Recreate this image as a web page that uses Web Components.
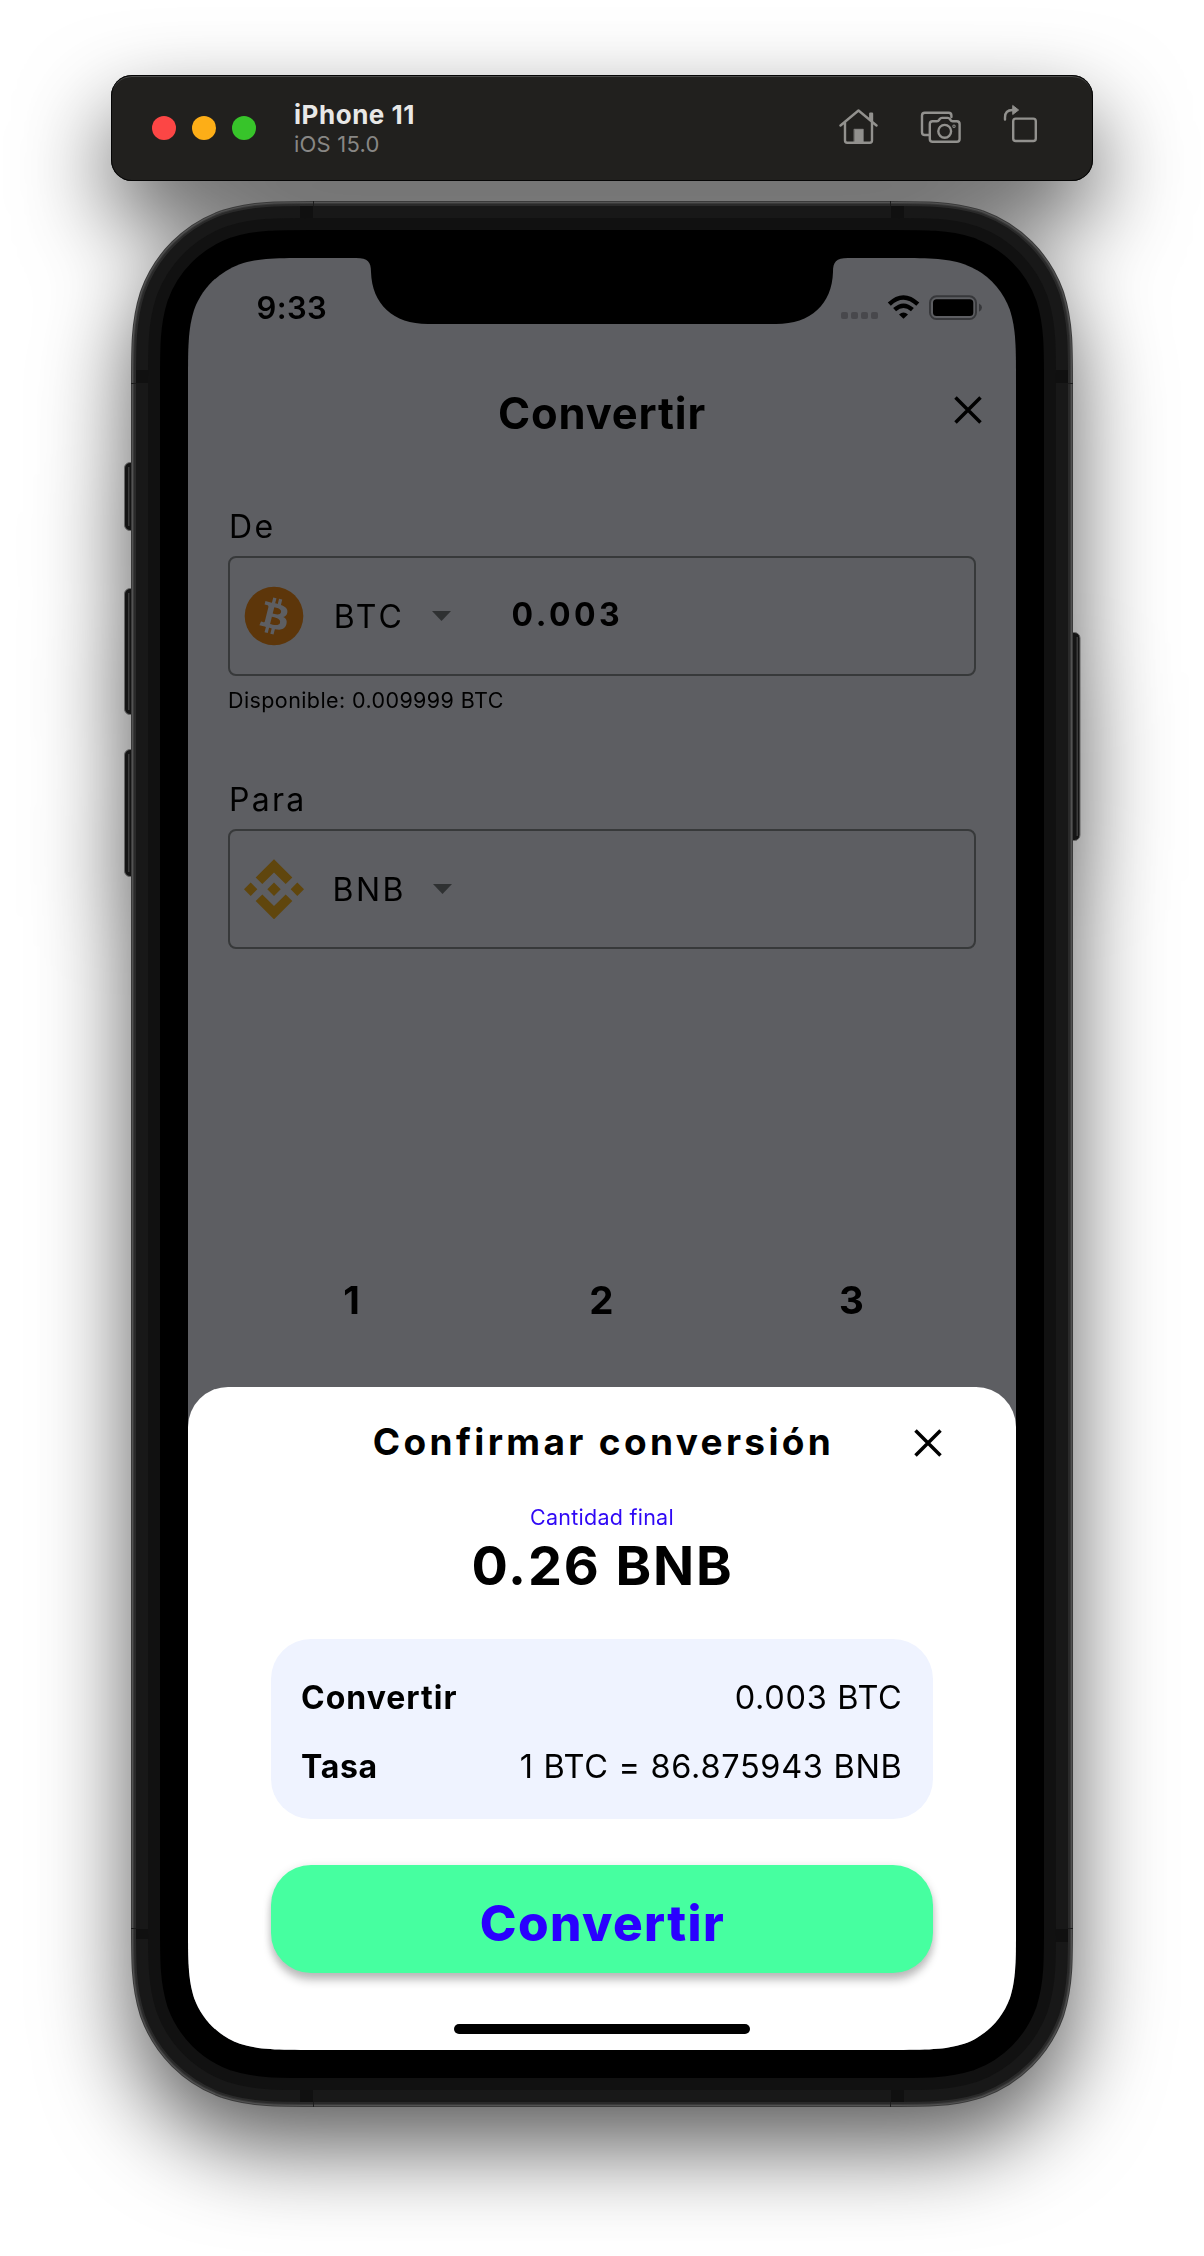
<!DOCTYPE html>
<html lang="es">
<head>
<meta charset="utf-8">
<title>Convertir</title>
<style>
html,body{margin:0;background:#fff}
body{width:1204px;height:2256px;overflow:hidden;font-family:Inter,"Liberation Sans",sans-serif;color:#000}
</style>
</head>
<body>
<simulator-stage>
  <simulator-bar name="iPhone 11" os="iOS 15.0"></simulator-bar>
  <phone-frame>
    <status-bar time="9:33"></status-bar>
    <screen-header>Convertir</screen-header>
    <coin-field label="De" coin="BTC" amount="0.003" note="Disponible: 0.009999 BTC"></coin-field>
    <coin-field class="to" label="Para" coin="BNB"></coin-field>
    <key-row keys="1 2 3"></key-row>
    <confirm-sheet slot="sheet">
      <sheet-row label="Convertir">0.003 BTC</sheet-row>
      <sheet-row label="Tasa" style="--ls:.7px">1 BTC = 86.875943 BNB</sheet-row>
    </confirm-sheet>
  </phone-frame>
</simulator-stage>
<script>
const define = (name, render) => customElements.define(name, class extends HTMLElement {
  connectedCallback() {
    if (this.shadowRoot) return;
    const attr = (key) => this.getAttribute(key) || '';
    this.attachShadow({ mode: 'open' }).innerHTML = '<style>*{box-sizing:border-box}svg{display:block}</style>' + render(attr);
  }
});

// Continuous-corner outline of the display, 828 x 1792
const corner = (() => {
  const r = 82, w = 828, h = 1792;
  const k = [1.528665, 1.08849, .86841, .63149, .37282, .16906, .07491].map(v => +(v * r).toFixed(2));
  const [a, b, c, d, e, f, g] = k;
  return `M${a} 0H${w-a}C${w-b} 0 ${w-c} 0 ${w-d} ${g}C${w-e} ${f} ${w-f} ${e} ${w-g} ${d}C${w} ${c} ${w} ${b} ${w} ${a}` +
    `V${h-a}C${w} ${h-b} ${w} ${h-c} ${w-g} ${h-d}C${w-f} ${h-e} ${w-e} ${h-f} ${w-d} ${h-g}C${w-c} ${h} ${w-b} ${h} ${w-a} ${h}` +
    `H${a}C${b} ${h} ${c} ${h} ${d} ${h-g}C${e} ${h-f} ${f} ${h-e} ${g} ${h-d}C0 ${h-c} 0 ${h-b} 0 ${h-a}` +
    `V${a}C0 ${b} 0 ${c} ${g} ${d}C${f} ${e} ${e} ${f} ${d} ${g}C${c} 0 ${b} 0 ${a} 0Z`;
})();

define('simulator-stage', () => `
<style>:host{display:flex;flex-direction:column;align-items:center;gap:20px;padding-top:75px;height:2181px;filter:drop-shadow(0 40px 45px rgba(0,0,0,.64))}</style>
<slot></slot>`);

define('simulator-bar', (a) => `
<style>
:host{display:flex;align-items:center;width:982px;height:106px;flex:none;box-sizing:border-box;padding:0 55px 0 41px;border-radius:21px;background:#21201e;
 box-shadow:inset 0 0 0 1px #050505,inset 0 2px 0 0 #4b4b4a}
.lights{display:flex;gap:16px}
.lights i{width:24px;height:24px;border-radius:50%}
.names{margin-left:38px;flex:1;display:flex;flex-direction:column}
b{font:700 26px/31px Inter,sans-serif;letter-spacing:.53px;color:#e8e8e7}
span{font:400 22px/28px Inter,sans-serif;letter-spacing:.22px;color:#888785}
.tools{display:flex;gap:41.5px}
.tools svg{fill:none;stroke:#92918e;stroke-width:2.4;stroke-linejoin:round;stroke-linecap:round}
</style>
<div class="lights"><i style="background:#fc4645"></i><i style="background:#fdae17"></i><i style="background:#37c42a"></i></div>
<div class="names"><b>${a('name')}</b><span>${a('os')}</span></div>
<div class="tools">
<svg width="40" height="50" viewBox="838 103 40 50"><path d="M840.5 125.5L858.5 110.5L876.5 125.5M845 122.5V140.6Q845 142.8 847.2 142.8H869.8Q872 142.8 872 140.6V113.6H870.3V119.5"/><path d="M854.3 129.2h9v13.6h-9z" fill="#92918e" stroke-width=".6"/></svg>
<svg width="42" height="50" viewBox="920 103 42 50"><path d="M929 135H924.8Q922 135 922 132.2V115.6Q922 112.8 924.8 112.8H948.6Q951.4 112.8 951.4 115.6V117"/><path d="M932.6 121.2H937Q938.4 121.2 939.2 119.8L939.7 119Q940.5 117.9 942 117.9H947.6Q949.1 117.9 949.9 119L950.4 119.8Q951.2 121.2 952.6 121.2H956.8Q959.6 121.2 959.6 124V138.9Q959.6 141.7 956.8 141.7H932.6Q929.8 141.7 929.8 138.9V124Q929.8 121.2 932.6 121.2Z"/><circle cx="944.7" cy="131.3" r="6.4"/><circle cx="954" cy="126.3" r=".5"/></svg>
<svg width="35" height="50" viewBox="1003 103 35 50"><rect x="1013.2" y="118.6" width="22.6" height="22.4" rx="2.6"/><path d="M1005 119.6V117.5Q1005 110 1012.5 110"/><path d="M1013 105.7L1018.6 110L1013 114.3Z" fill="#92918e" stroke-width="1"/></svg>
</div>`);

define('phone-frame', () => {
  const rings = [[57,'#3a3a3a'],[56,'#525252'],[55,'#3a3a3a'],[54,'#2a2a2a'],[52,'#181818'],[40,'#111'],[28,'#000']];
  const button = (x, y, h, hx) => `<rect x="${x+.5}" y="${y+.5}" width="14" height="${h-1}" rx="5.5" fill="#141414" stroke="#666"/><rect x="${hx}" y="${y+5}" width="1.5" height="${h-10}" fill="#3b3b3b"/>`;
  return `
<style>
:host{display:block;position:relative;width:942px;height:1906px;flex:none;box-sizing:border-box;padding:57px}
.shell{position:absolute;inset:0;overflow:visible}
.screen{position:relative;display:flex;flex-direction:column;width:828px;height:1792px;background:#5d5e62;clip-path:path('${corner}');overflow:hidden}
.notch{position:absolute;left:0;top:0}
::slotted(.to){margin-top:66px}
.sheet{position:absolute;left:0;right:0;bottom:0}
</style>
<svg class="shell" width="942" height="1906">
${button(-7,261,69,-3)}${button(-7,387,127,-3)}${button(-7,548,128,-3)}${button(934.5,431,209,945.5)}
<g transform="translate(57 57)" fill="none">${rings.map(([w,c]) => `<path d="${corner}" stroke="${c}" stroke-width="${w*2}"/>`).join('')}</g>
<path fill="#101010" d="M169 5h13v12h-13zM760 5h13v12h-13zM169 1889h13v12h-13zM760 1889h13v12h-13zM5 169h12v13H5zM925 169h12v13h-12zM5 1728h12v10H5zM925 1728h12v13h-12z"/>
<path fill="#1c1c1c" d="M182 0h1v5h-1zM759 0h1v5h-1zM182 1901h1v5h-1zM759 1901h1v5h-1zM0 182h5v1H0zM937 182h5v1h-5zM0 1727h5v1H0zM937 1727h5v1h-5z"/>
</svg>
<div class="screen"><slot></slot>
<svg class="notch" width="828" height="70"><path d="M168 0C180 0 183 4 183 14C184 46 205 66 240 66H588C623 66 644 46 645 14C645 4 648 0 660 0Z"/></svg>
<div class="sheet"><slot name="sheet"></slot></div></div>`;
});

define('status-bar', (a) => `
<style>:host{display:flex;justify-content:space-between;height:125px;flex:none;box-sizing:border-box;padding:32px 33px 0 68.5px}
span{font:600 31px/36px Inter,sans-serif;letter-spacing:.35px}svg{margin-top:4px}</style>
<span>${a('time')}</span>
<svg width="142" height="26" viewBox="841 294 142 26">
<g fill="#48484c"><rect x="841" y="312" width="7" height="7" rx="2"/><rect x="851" y="312" width="7" height="7" rx="2"/><rect x="861" y="312" width="7" height="7" rx="2"/><rect x="871" y="312" width="7" height="7" rx="2"/></g>
<g fill="none" stroke="#000"><path d="M889.3 304.2Q903.4 290.8 917.8 304.2" stroke-width="4.4"/><path d="M894.6 309.7Q903.5 301.6 912.4 309.7" stroke-width="4.3"/></g>
<path d="M899 314.4Q903.5 310.6 908 314.4L903.5 318.8Z"/>
<rect x="930" y="296.3" width="46" height="22.7" rx="6.5" fill="none" stroke="#37383b" stroke-width="2"/>
<rect x="933" y="299.2" width="40.3" height="16.8" rx="3.5"/>
<path d="M979 303.5Q982 305 982 307.6Q982 310.2 979 311.7Z" fill="#37383b"/></svg>`);

const cross = '<svg width="28" height="28" viewBox="0 0 28 28"><path d="M1.5 1.5L26.5 26.5M26.5 1.5L1.5 26.5" stroke="#000" stroke-width="3.5"/></svg>';

define('screen-header', () => `
<style>:host{display:grid;grid-template-columns:1fr auto 1fr;align-items:center;height:60px;flex:none;margin-bottom:64px;padding:0 34px}
h1{grid-column:2;margin:0;font:700 43.5px/60px Inter,sans-serif;letter-spacing:.85px}
svg{justify-self:end;margin-bottom:6px}</style><h1><slot></slot></h1>${cross}`);

const coins = {
  BTC: { ls: 2.9, shift: -.3, art: '<circle cx="30" cy="30" r="29.3" fill="#5d360a"/><path transform="translate(.2 .2) scale(1.8625)" fill="#5d5e62" d="M23.189 14.02c.314-2.096-1.283-3.223-3.465-3.975l.708-2.84-1.728-.43-.69 2.765c-.454-.114-.92-.22-1.385-.326l.695-2.783L15.596 6l-.708 2.839c-.376-.086-.746-.17-1.104-.26l.002-.009-2.384-.595-.46 1.846s1.283.294 1.256.312c.7.175.826.638.805 1.006l-.806 3.235c.048.012.11.03.18.057l-.183-.045-1.13 4.532c-.086.212-.303.531-.793.41.018.025-1.256-.313-1.256-.313l-.858 1.978 2.25.561c.418.105.828.215 1.231.318l-.715 2.872 1.727.43.708-2.84c.472.127.93.245 1.378.357l-.706 2.828 1.728.43.715-2.866c2.948.558 5.164.333 6.097-2.333.752-2.146-.037-3.385-1.588-4.192 1.13-.26 1.98-1.003 2.207-2.538zm-3.95 5.538c-.533 2.147-4.148.986-5.32.695l.95-3.805c1.172.293 4.929.872 4.37 3.11zm.535-5.569c-.487 1.953-3.495.96-4.47.717l.86-3.45c.975.243 4.118.696 3.61 2.733z"/>' },
  BNB: { ls: 2.4, shift: -.3, art: '<g transform="translate(30 30.3)" fill="#60460d"><path d="M0-30L18.3-11.7L11.7-5.2L0-16.7L-11.7-5.2L-18.3-11.7ZM0 30L18.3 11.7L11.7 5.2L0 16.7L-11.7 5.2L-18.3 11.7ZM0-6.7L6.7 0L0 6.7L-6.7 0ZM-23.3-6.7L-16.7 0L-23.3 6.7L-30 0ZM23.3-6.7L30 0L23.3 6.7L16.7 0Z"/></g>' }
};

define('coin-field', (a) => {
  const coin = coins[a('coin')];
  return `
<style>
:host{display:flex;flex-direction:column;flex:none;padding:0 40px}
label{font:400 32px/40px Inter,sans-serif;letter-spacing:2.3px;margin-bottom:9px;padding-left:1px}
.box{display:flex;align-items:center;height:120px;border:2px solid #37393a;border-radius:8px;padding-left:14px}
.pick{display:flex;align-items:center;justify-content:center;gap:27px;width:177px;margin-left:${coin.shift}px;margin-right:${-coin.shift}px;font:400 32px/40px Inter,sans-serif;letter-spacing:${coin.ls}px}
.pick span{margin-top:2px}
b{font:700 32px/40px Inter,sans-serif;letter-spacing:3.5px;margin:-2px 0 0 30.5px}
small{font:400 21.5px/28px Inter,sans-serif;letter-spacing:.4px;margin-top:10px}
</style>
<label>${a('label')}</label>
<div class="box"><svg width="60" height="60">${coin.art}</svg>
<div class="pick"><span>${a('coin')}</span><svg width="19" height="10"><path d="M0 0H19L9.5 10Z" fill="#2f3132"/></svg></div>
${a('amount') ? `<b>${a('amount')}</b>` : ''}</div>
${a('note') ? `<small>${a('note')}</small>` : ''}`;
});

define('key-row', (a) => `
<style>:host{display:grid;grid-template-columns:repeat(3,1fr);padding:0 39.5px 0 38.5px;margin-top:327px}
span{text-align:center;font:700 38.5px/48px Inter,sans-serif}</style>
${a('keys').split(' ').map(k => `<span>${k}</span>`).join('')}`);

define('sheet-row', (a) => `
<style>:host{display:flex;justify-content:space-between;font:400 32.5px/40px Inter,sans-serif;letter-spacing:.68px}
b{font-weight:700;font-size:32px;letter-spacing:var(--ls,1px)}span{margin-right:.5px}</style>
<b>${a('label')}</b><span><slot></slot></span>`);

define('confirm-sheet', () => `
<style>
:host{display:flex;flex-direction:column;align-items:center;height:663px;box-sizing:border-box;background:#fff;border-radius:40px 40px 0 0;padding:30px 83px 16px}
header{display:grid;grid-template-columns:1fr auto 1fr;align-items:center;margin:0 0 0 3px;width:659px}
h2{grid-column:2;margin:-1px 0 1px;font:700 37px/52px Inter,sans-serif;letter-spacing:3.34px}
header svg{justify-self:end;margin-right:-8.5px}
small{font:400 21.5px/28px Inter,sans-serif;letter-spacing:.25px;color:#2f08f5;margin-top:34px}
strong{font:700 54px/68px Inter,sans-serif;letter-spacing:1.85px;margin:1px 0 -1px 1px}
.card{align-self:stretch;display:flex;flex-direction:column;gap:29px;height:180px;background:#eff3ff;border-radius:40px;margin-top:40px;padding:39px 30px 0}
button{align-self:stretch;height:108px;margin:46px 0 0;border:0;border-radius:40px;background:#46ffa0;color:#2a00ff;padding:8px 0 0 1px;
 font:800 49.5px/60px Inter,sans-serif;letter-spacing:1.4px;box-shadow:0 8px 8px rgba(0,0,0,.2),0 2px 10px rgba(0,0,0,.14)}
.home{width:296px;height:10px;border-radius:5px;background:#000;margin-top:auto}
</style>
<header><h2>Confirmar conversión</h2>${cross}</header>
<small>Cantidad final</small>
<strong>0.26 BNB</strong>
<div class="card"><slot></slot></div>
<button>Convertir</button>
<div class="home"></div>`);
</script>
</body>
</html>
